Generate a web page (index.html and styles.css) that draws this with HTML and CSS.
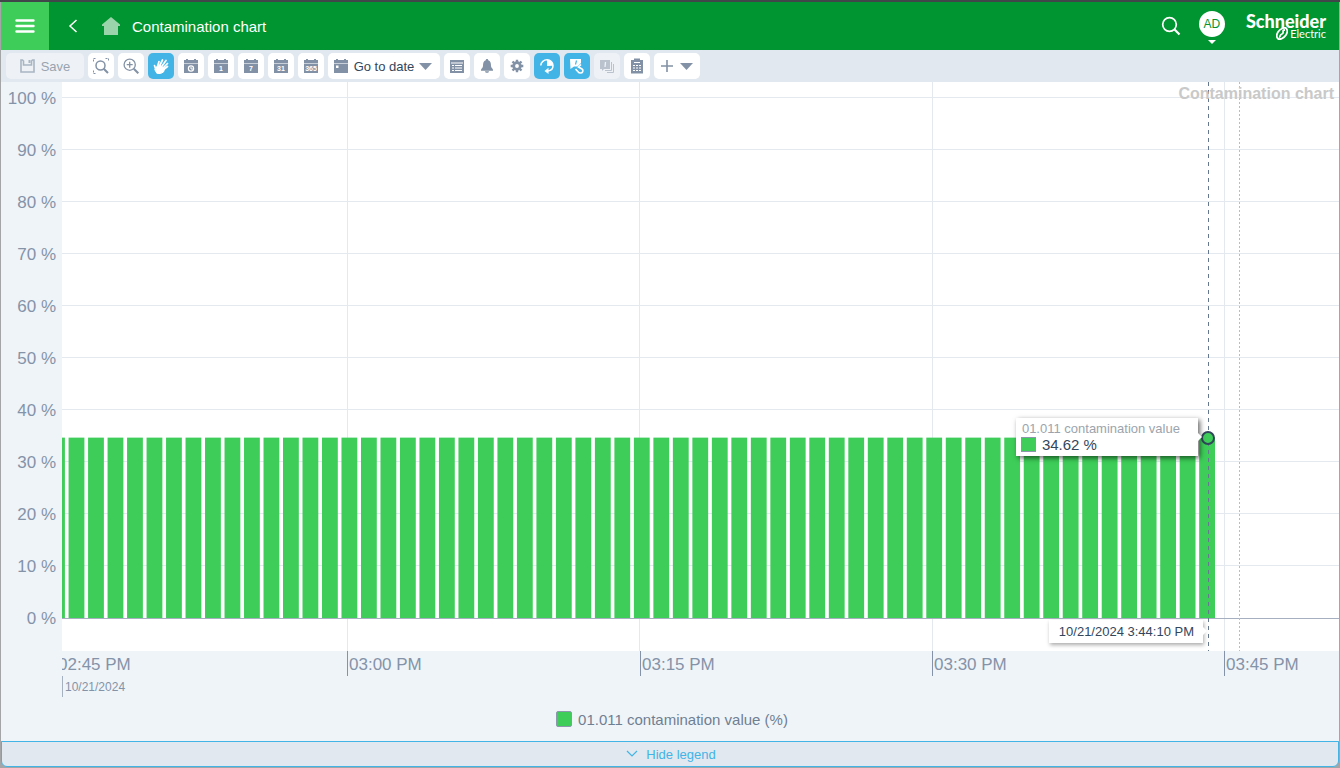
FILE: index.html
```
<!DOCTYPE html>
<html lang="en">
<head>
<meta charset="utf-8">
<title>Contamination chart</title>
<link rel="stylesheet" href="styles.css">
</head>
<body>
<svg class="defs" aria-hidden="true">
  <symbol id="cal" viewBox="0 0 16 16"><path d="M1 2h2V1h2v1h6V1h2v1h2v3H1z" fill="currentColor"/><path d="M1 5h14v1H1z" fill="#c9d0d9"/><path d="M1 6h14v9H1z" fill="currentColor"/></symbol>
</svg>
<div class="app">
  <header class="header">
    <button class="menu" aria-label="Menu"><svg width="20" height="16" viewBox="0 0 20 16"><path d="M1.5 2.5h17M1.5 8h17M1.5 13.5h17" stroke="#fff" stroke-width="2.4" stroke-linecap="round"/></svg></button>
    <button class="plain back" aria-label="Back"><svg width="10" height="16" viewBox="0 0 10 16"><path d="M8.500 2L2 8l6.500 6" fill="none" stroke="#fff" stroke-width="1.500"/></svg></button>
    <a class="home" href="#" aria-label="Home"><svg width="18" height="18" viewBox="0 0 18 18"><path d="M9 0l9 7.500V9h-2v9H2V9H0V7.500z" fill="#9ad4aa"/></svg></a>
    <h1 class="title">Contamination chart</h1>
    <button class="plain search" aria-label="Search"><svg width="20" height="20" viewBox="0 0 20 20"><circle cx="8.500" cy="8.500" r="6.800" fill="none" stroke="#fff" stroke-width="1.700"/><path d="M13.300 13.300l5.200 5.200" stroke="#fff" stroke-width="2.200"/></svg></button>
    <button class="plain user"><span class="avatar">AD</span><svg width="8" height="4" viewBox="0 0 8 4"><path d="M0 0h8L4 4z" fill="#fff"/></svg></button>
    <div class="logo">
      <span class="logo-top">Schneider</span>
      <span class="logo-bottom"><svg width="12" height="13" viewBox="0 0 12 13"><path d="M5 12C0 13 0 8 2 5s6-5 8-4M7 1c5-1 5 4 3 7s-6 5-8 4M9 3C5 3 9 6 6 7S5 10 3 10" fill="none" stroke="#fff" stroke-width="1.800"/></svg><span>Electric</span></span>
    </div>
  </header>

  <div class="toolbar" role="toolbar" aria-label="Chart tools">
    <button class="tool save" disabled><svg width="15" height="14" viewBox="0 0 15 14"><path d="M1 1h1.500l1 1v4h8V2l1-1H14v12H1z" fill="none" stroke="#a9b5c3" stroke-width="1.600"/><path d="M8.500 1h2v3h-2z" fill="#a9b5c3"/></svg>Save</button>
    <button class="tool" aria-label="Zoom to area"><svg width="16" height="16" viewBox="0 0 16 16" fill="none" stroke="currentColor"><circle cx="7.500" cy="7.500" r="4.500" stroke-width="1.500"/><path d="M10.700 10.700l4.300 4.300" stroke-width="2"/><path d="M.500 3.500v-3h3M12.500.500h3v3M.500 12.500v3h3" stroke-dasharray="2 1"/></svg></button>
    <button class="tool" aria-label="Zoom in"><svg width="16" height="16" viewBox="0 0 16 16" fill="none" stroke="currentColor"><circle cx="6.700" cy="6.700" r="5.600" stroke-width="1.300"/><path d="M10.800 10.800l4.500 4.500" stroke-width="2"/><path d="M3.700 6.700h6M6.700 3.700v6" stroke-width="1.300"/></svg></button>
    <button class="tool on" aria-label="Pan"><svg width="16" height="16" viewBox="0 0 16 16" stroke="#fff" stroke-linecap="round" fill="none"><path d="M6 9L9.500 2M8 9.500l5-7M9.500 10.500l5-5M10 12l4.500-3.500M4 10L6 3.500M3 12L1.500 7.500" stroke-width="1.700"/><path d="M3.500 9l3.500-2 4.500 4-1 3-3 1.500H4L2 12z" fill="#fff"/></svg></button>
    <button class="tool" aria-label="Last hour"><svg width="16" height="16"><use href="#cal"/><circle cx="8" cy="10.500" r="2.600" fill="none" stroke="#fff" stroke-width="1.200"/><path d="M8 9v2h2" fill="none" stroke="#fff"/></svg></button>
    <button class="tool" aria-label="Last day"><svg width="16" height="16"><use href="#cal"/><text class="cal-text" x="8" y="13">1</text></svg></button>
    <button class="tool" aria-label="Last week"><svg width="16" height="16"><use href="#cal"/><text class="cal-text" x="8" y="13">7</text></svg></button>
    <button class="tool" aria-label="Last month"><svg width="16" height="16"><use href="#cal"/><text class="cal-text" x="8" y="13">31</text></svg></button>
    <button class="tool" aria-label="Last year"><svg width="16" height="16"><use href="#cal"/><text class="cal-text" x="8" y="13">365</text></svg></button>
    <button class="tool goto"><svg width="16" height="16"><use href="#cal"/><path d="M3 7.500h2.500V10H3z" fill="#fff"/></svg><span>Go to date</span><svg width="13" height="7" viewBox="0 0 13 7"><path d="M0 0h13L6.500 7z" fill="currentColor"/></svg></button>
    <button class="tool" aria-label="Table"><svg width="16" height="16" viewBox="0 0 16 16"><path d="M1 2h14v13H1z" fill="currentColor"/><path d="M2 5h12M3 7.500h2M6 7.500h7M3 10h2M6 10h7M3 12.500h2M6 12.500h7" stroke="#fff" stroke-width="1.200"/></svg></button>
    <button class="tool" aria-label="Alarms"><svg width="16" height="16" viewBox="0 0 16 16" fill="currentColor"><path d="M8 1c.8 0 1.200.5 1.200 1.200C11.500 3 12 5 12 8c0 2 2 2.500 2 4v.8H2V12c0-1.500 2-2 2-4 0-3 .5-5 2.800-5.800C6.800 1.500 7.200 1 8 1zM6 13.200h4c0 2-4 2-4 0z"/></svg></button>
    <button class="tool" aria-label="Settings"><svg width="16" height="16" viewBox="0 0 16 16" fill="none" stroke="currentColor"><circle cx="8" cy="8" r="3.300" stroke-width="2.800"/><path d="M8 1.700v2.500M8 11.800v2.500M1.700 8h2.500M11.800 8h2.500M3.500 3.500l1.700 1.700M10.800 10.800l1.700 1.700M12.500 3.500l-1.700 1.700M5.200 10.800l-1.700 1.700" stroke-width="2.400"/></svg></button>
    <button class="tool on" aria-label="Auto refresh"><svg width="16" height="16" viewBox="0 0 16 16"><path d="M1.800 7.500C2 4 5 1.800 8 1.800c3.500 0 6 2.500 6 5.700 0 3-2 5.200-5 5.400" fill="none" stroke="#fff" stroke-width="1.500"/><path d="M8 1.800c3.500 0 6 2.500 6 5.900L8 8zM9.500 9.800V16L5.500 12.900z" fill="#fff"/></svg></button>
    <button class="tool on" aria-label="Link notes"><svg width="16" height="16" viewBox="0 0 16 16"><path d="M1 1h11v4L8.500 8.500H5L1.500 11z" fill="#fff"/><path d="M7.500 2.500l-1 4" stroke="#42b4e6" stroke-width="1.200"/><path d="M12 6.500L9.500 9l3.500 2c2 1.500.5 4-1.500 4-1 0-2-.500-2.500-1.200L6.500 11" fill="none" stroke="#fff" stroke-width="1.600"/></svg></button>
    <button class="tool off" aria-label="Notes" disabled><svg width="16" height="16" viewBox="0 0 16 16"><path d="M1 2h10v9H5l-2 2v-2H1z" fill="#b9c2cd"/><path d="M12.500 4v8.500H6M14.500 6v8.500H8" fill="none" stroke="#b9c2cd"/><path d="M6.500 4L6 9" stroke="#eef2f6" stroke-width="1.300"/></svg></button>
    <button class="tool" aria-label="Report"><svg width="16" height="16" viewBox="0 0 16 16"><path d="M2 2h3V.500h6V2h3v13.500H2z" fill="currentColor"/><path d="M5 4.500h6M4 7.500h2M7 7.500h2M10 7.500h2M4 10h2M7 10h2M10 10h2M4 12.500h2M7 12.500h2M10 12.500h2" stroke="#fff" stroke-width="1.100"/></svg></button>
    <button class="tool add" aria-label="Add"><svg width="14" height="14" viewBox="0 0 14 14"><path d="M1 7h12M7 1v12" stroke="currentColor" stroke-width="1.600"/></svg><svg width="13" height="7" viewBox="0 0 13 7"><path d="M0 0h13L6.500 7z" fill="currentColor"/></svg></button>
  </div>

  <main class="chart">
    <div class="y-axis">
      <span>100 %</span><span>90 %</span><span>80 %</span><span>70 %</span><span>60 %</span><span>50 %</span><span>40 %</span><span>30 %</span><span>20 %</span><span>10 %</span><span>0 %</span>
    </div>
    <div class="plot">
      <svg class="canvas" id="canvas" viewBox="0 0 1277 569" preserveAspectRatio="none" role="img" aria-label="Contamination value over time"></svg>
      <h2 class="watermark">Contamination chart</h2>
      <div class="marker"></div>
      <div class="tip value-tip">
        <div class="tip-name">01.011 contamination value</div>
        <div class="tip-value"><i class="swatch small"></i>34.62 %</div>
      </div>
      <div class="tip time-tip">10/21/2024 3:44:10 PM</div>
    </div>
    <div class="x-axis">
      <div class="ticks"><span class="first">02:45 PM</span><span>03:00 PM</span><span>03:15 PM</span><span>03:30 PM</span><span>03:45 PM</span></div>
      <div class="date">10/21/2024</div>
    </div>
    <div class="legend"><i class="swatch"></i>01.011 contamination value (%)</div>
  </main>
  <button class="hide-legend"><svg width="12" height="8" viewBox="0 0 12 8"><path d="M1 1l5 5 5-5" fill="none" stroke="currentColor" stroke-width="1.200"/></svg>Hide legend</button>
</div>
<script src="chart.js"></script>
</body>
</html>
```
FILE: styles.css
```
* { box-sizing: border-box; }
body { margin: 0; background: #a3a5a6; font-family: "Liberation Sans", Arial, sans-serif; font-size: 13px; color: #32465c; }
button { font: inherit; color: inherit; border: 0; padding: 0; background: none; }
svg { display: block; flex: none; }
h1, h2 { margin: 0; }
.defs { position: absolute; width: 0; height: 0; }
.app { display: flex; flex-direction: column; height: 100vh; padding: 0 1px 1px; border-top: 2px solid #40464a; }

.header { display: flex; align-items: center; flex: none; height: 48px; padding-right: 13px; background: #009530; color: #fff; }
.menu { display: flex; align-items: center; justify-content: center; align-self: stretch; width: 48px; background: #3dcd58; }
.back { margin-left: 19px; }
.home { margin-left: 24px; }
.title { margin-left: 12px; padding-top: 2px; font-size: 15px; font-weight: 400; line-height: 20px; }
.search { margin-left: auto; }
.user { display: flex; flex-direction: column; align-items: center; gap: 3px; margin: 2px 0 0 18px; }
.avatar { display: flex; align-items: center; justify-content: center; width: 26px; height: 26px; border-radius: 50%; background: #fff; color: #009530; font-size: 12px; }
.logo { display: flex; flex-direction: column; align-items: flex-end; margin-left: 21px; }
.logo-top { font-family: Lato, sans-serif; font-size: 18px; font-weight: 900; line-height: 15px; }
.logo-bottom { display: flex; align-items: center; gap: 2px; height: 10px; font-family: Lato, sans-serif; font-size: 11px; line-height: 10px; }

.toolbar { display: flex; align-items: center; gap: 4px; flex: none; height: 32px; padding-left: 5px; background: #e1e8ef; }
.tool { display: flex; align-items: center; justify-content: center; width: 26px; height: 26px; border-radius: 5px; background: #fff; color: #8291a5; }
.tool.on { background: #42b4e6; }
.tool.off { background: #eef2f6; }
.tool.save { gap: 6px; width: 78px; background: #eef2f6; color: #98a3b0; }
.tool.goto { gap: 5px; width: 112px; padding-right: 3px; }
.tool.goto span { color: #32465c; }
.tool.add { gap: 6px; width: 46px; padding-right: 2px; }
.cal-text { font-size: 7px; font-weight: 700; fill: #fff; text-anchor: middle; }

.chart { display: grid; grid-template: 1fr 46px 44px / 61px 1fr; flex: 1; min-height: 0; background: #eff4f9; color: #8493a8; }
.y-axis { display: flex; flex-direction: column; align-items: flex-end; justify-content: space-between; padding: 7px 6px 22px 0; font-size: 17px; line-height: 20px; }
.plot { position: relative; min-height: 0; background: #fff; }
.watermark { position: absolute; top: 3px; right: 5px; font-size: 16px; line-height: 18px; color: #c9c9c9; }
.canvas { position: absolute; inset: 0; width: 100%; height: 100%; }
.grid { stroke: #e4e9f0; }
.bar { fill: #3dcd58; }
.baseline { stroke: #a5afbf; }
.cursor { stroke: #66788f; stroke-dasharray: 4 4; }
.now { stroke: #bcbcbc; stroke-dasharray: 2 2; }
.marker { position: absolute; left: 89.75%; top: 62.5%; width: 14px; height: 14px; margin: -7px; border: 2px solid #32465c; border-radius: 50%; background: #3dcd58; }
.tip { position: absolute; background: #fff; color: #32465c; box-shadow: 2px 2px 5px #0009; white-space: nowrap; }
.tip::after { content: ""; position: absolute; left: 100%; top: 50%; margin-top: -4px; border: 4px solid transparent; border-right: 0; border-left-color: #fff; }
.value-tip { right: 11.05%; top: 59%; width: 182px; padding: 3px 5px 3px 6px; }
.tip-name { line-height: 16px; color: #9ba4ae; }
.tip-value { display: flex; align-items: center; gap: 6px; font-size: 15px; line-height: 16px; }
.time-tip { right: 10.65%; top: 94.55%; padding: 0 9px 0 10px; line-height: 23px; box-shadow: 1px 2px 4px #0005; }
.swatch { width: 16px; height: 16px; border: 1px solid #8b98ac; border-radius: 2px; background: #3dcd58; }
.swatch.small { width: 15px; height: 15px; margin-left: -1px; border-radius: 0; }

.x-axis { grid-column: 2; overflow: hidden; }
.ticks { display: grid; grid-template: 25px / 285fr 293fr 292fr 292fr 115fr; font-size: 17px; line-height: 27px; }
.ticks span { padding-left: 1px; border-left: 1px solid #8493a8; white-space: nowrap; }
.ticks .first { margin-left: -6px; }
.date { height: 21px; padding-left: 2px; border-left: 1px solid #a5b0c0; font-size: 12px; line-height: 22px; }
.legend { grid-column: 1 / -1; display: flex; align-items: center; justify-content: center; gap: 6px; padding-left: 4px; font-size: 15px; color: #6f7f92; }
.hide-legend { display: flex; align-items: center; justify-content: center; gap: 8px; flex: none; height: 26px; padding-left: 2px; border: 1px solid #42b4e6; border-radius: 0 0 6px 6px; background: #e1e8ef; color: #42b4e6; }
```
FILE: chart.js
```
const canvas = document.getElementById("canvas");
const add = (tag, cls, attrs) => {
  const el = document.createElementNS("http://www.w3.org/2000/svg", tag);
  el.setAttribute("class", cls);
  for (const key in attrs) el.setAttribute(key, attrs[key]);
  canvas.append(el);
};
const line = (cls, x1, y1, x2, y2) => add("line", cls, { x1, y1, x2, y2 });
const zero = 536;
const perPercent = 5.21;
const quarterHour = 292.4;
const barStep = quarterHour / 15;

for (let p = 10; p <= 100; p += 10) {
  const y = Math.floor(zero - p * perPercent) + 0.5;
  line("grid", 0, y, 1277, y);
}
for (let i = 0; i < 4; i++) {
  const x = Math.floor(285.5 + i * quarterHour) + 0.5;
  line("grid", x, 0, x, 569);
}
for (let i = 0; i < 60; i++) {
  const height = 34.62 * perPercent;
  add("rect", "bar", { x: 1137.2 - i * barStep, y: zero - height, width: 15.8, height });
}
line("baseline", 0, zero + 0.5, 1277, zero + 0.5);
line("cursor", 1146.5, 0, 1146.5, 569);
line("now", 1177.5, 0, 1177.5, 569);
```
